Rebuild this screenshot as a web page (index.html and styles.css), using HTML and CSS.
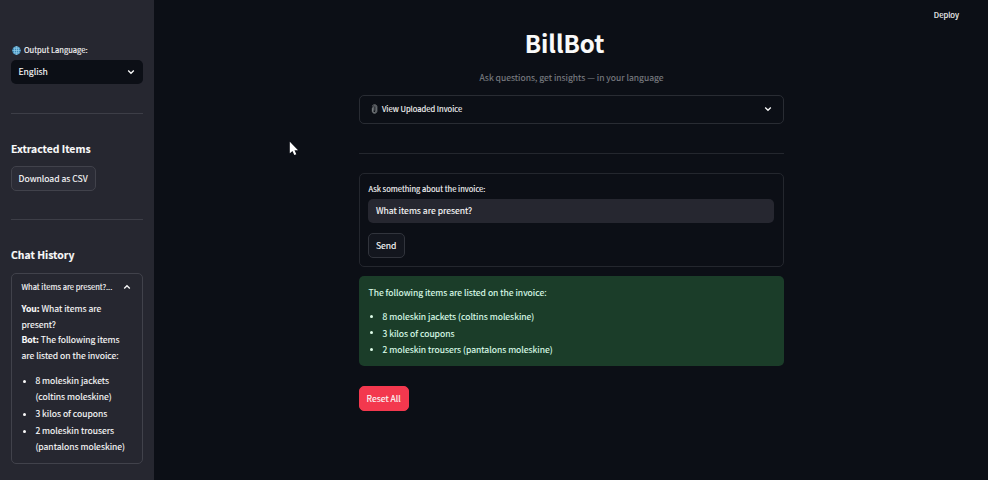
FILE: index.html
```html
<!DOCTYPE html>
<html lang="en">
<head>
<meta charset="utf-8">
<title>BillBot</title>
<link rel="stylesheet" href="styles.css">
</head>
<body>
<div class="app">
  <aside class="sidebar">
    <div class="label lang-label">
      <svg class="globe" viewBox="0 0 20 20"><circle cx="10" cy="10" r="9.5" fill="#3b88b6"/><g fill="none" stroke="#9bd4ee" stroke-width="1.4"><ellipse cx="10" cy="10" rx="4.5" ry="9"/><path d="M10 1v18M1 10h18M3 5h14M3 15h14"/></g></svg>
      <span>Output Language:</span>
    </div>
    <div class="select"><span>English</span><svg class="chev" viewBox="0 0 8 8"><path d="M1.2 2.5 4 5.3 6.8 2.5"/></svg></div>
    <hr class="rule rule-one">
    <h3 class="heading">Extracted Items</h3>
    <button class="button download">Download as CSV</button>
    <hr class="rule rule-two">
    <h3 class="heading">Chat History</h3>
    <section class="history">
      <div class="history-head"><span class="label">What items are present?...</span><svg class="chev" viewBox="0 0 8 8"><path d="M1.2 5.5 4 2.7 6.8 5.5"/></svg></div>
      <p><b>You:</b> What items are<br>present?<br><b>Bot:</b> The following items<br>are listed on the invoice:</p>
      <ul class="list">
        <li>8 moleskin jackets<br>(coltins moleskine)</li>
        <li>3 kilos of coupons</li>
        <li>2 moleskin trousers<br>(pantalons moleskine)</li>
      </ul>
    </section>
  </aside>
  <main class="main">
    <span class="deploy">Deploy</span>
    <div class="content">
      <h1>BillBot</h1>
      <p class="tagline">Ask questions, get insights — in your language</p>
      <div class="expander">
        <svg class="clip" viewBox="0 0 8 12"><path d="M2.1 3v5.5a1.8 1.8 0 0 0 3.6 0V3.2a1.2 1.2 0 0 0-2.4 0V8M1.5 2.5C2 .4 6.8.4 6.8 3v5.8c0 3-5.4 3-5.4 0V5"/></svg>
        <span class="label">View Uploaded Invoice</span>
        <svg class="chev" viewBox="0 0 8 8"><path d="M1.2 2.5 4 5.3 6.8 2.5"/></svg>
      </div>
      <hr class="rule rule-main">
      <form class="form">
        <div class="label">Ask something about the invoice:</div>
        <div class="input">What items are present?</div>
        <button type="button" class="button send">Send</button>
      </form>
      <section class="answer">
        <p>The following items are listed on the invoice:</p>
        <ul class="list">
          <li>8 moleskin jackets (coltins moleskine)</li>
          <li>3 kilos of coupons</li>
          <li>2 moleskin trousers (pantalons moleskine)</li>
        </ul>
      </section>
      <button class="button reset">Reset All</button>
    </div>
  </main>
</div>
<svg class="cursor" viewBox="0 0 10 15"><path d="M.8.8v11.5l2.7-2.4 1.8 4.2 2-.9-1.8-4H9z" fill="#fff"/></svg>
</body>
</html>
```
FILE: styles.css
```css
* { box-sizing: border-box; }
body {
  margin: 0;
  background: #0c0f16;
  color: #fafafa;
  font: 8.65px/15.6px "Noto Sans CJK SC", "Noto Sans", sans-serif;
  -webkit-text-stroke: .12px currentColor;
}
h1, h3, p, ul { margin: 0; }
.app { display: flex; height: 480px; overflow: hidden; white-space: nowrap; }
.sidebar { width: 154px; flex: none; background: #262730; padding: 43px 11px 0; }
.label { font-size: 7.58px; line-height: 14px; }
.lang-label { display: flex; align-items: center; gap: 3px; padding-left: 1px; }
.globe { width: 9px; height: 9px; }
.chev { width: 8px; height: 8px; fill: none; stroke: #fafafa; stroke-width: 1.3; margin-left: auto; }
.select {
  display: flex; align-items: center; height: 24px; margin-top: 2.5px;
  padding: 0 8px 0 7.5px; border-radius: 5px; background: #0c0f16;
}
.rule { border: 0; height: 1px; background: #3d3e47; margin: 0; }
.rule-one { margin-top: 29px; }
.rule-two { margin-top: 28px; }
.heading { font-size: 10.4px; line-height: 15px; font-weight: 700; margin-top: 27px; }
.button {
  display: block; height: 25px; padding: 0 6.5px; border: 1px solid #41424b; border-radius: 5px;
  background: #2b2c36; color: #fafafa; font: inherit; line-height: 23px; text-align: left;
}
.download { width: 85px; margin-top: 10.5px; }
.history { height: 191px; margin-top: 11px; padding: 0 11px 0 9.4px; border: 1px solid #41424b; border-radius: 5px; }
.history-head { display: flex; align-items: center; height: 27px; padding-bottom: 1.5px; }
.list { padding: 0; list-style: none; }
.list li { position: relative; padding-left: 14px; }
.list li::before {
  content: ""; position: absolute; left: 1.5px; top: 6.5px;
  width: 3px; height: 3px; border-radius: 50%; background: currentColor;
}
.history .list { margin-top: 10px; }
.history .list li + li { margin-top: 1.6px; }
.main { flex: 1; position: relative; }
.deploy { position: absolute; right: 29px; top: 7px; font-size: 7.7px; }
.content { width: 425px; margin-left: 205px; }
h1 { padding: 25px 14px 0 0; font-size: 24px; line-height: 36px; text-align: center; }
.tagline { margin-top: 8.5px; color: #7b7d82; text-align: center; }
.expander {
  display: flex; align-items: center; height: 29px; margin-top: 9.9px; padding: 0 11.5px 0 11px;
  border: 1px solid #292c33; border-radius: 5px;
}
.clip { width: 7px; height: 10px; margin-right: 4px; fill: none; stroke: #94979b; stroke-width: .9; }
.rule-main { margin-top: 28.6px; background: #24272e; }
.form { height: 94px; margin-top: 19px; padding: 8px 9px 9px 8.4px; border: 1px solid #24272e; border-radius: 5px; }
.input { height: 24px; margin-top: 3px; padding: 0 7.5px; border-radius: 5px; background: #262730; line-height: 23.4px; }
.send { width: 37px; margin-top: 10px; background: #13161e; border-color: #31343c; }
.answer { height: 90px; margin-top: 9.8px; padding: 8.6px 9.5px; border-radius: 5px; background: #1b3d29; color: #dffde9; }
.answer .list { margin-top: 7.6px; }
.answer .list li { line-height: 16.6px; }
.reset { width: 50px; margin-top: 19.5px; border-color: #f3384e; background: #f3384e; }
.cursor { position: absolute; left: 289px; top: 141px; width: 10px; height: 15px; }
```
